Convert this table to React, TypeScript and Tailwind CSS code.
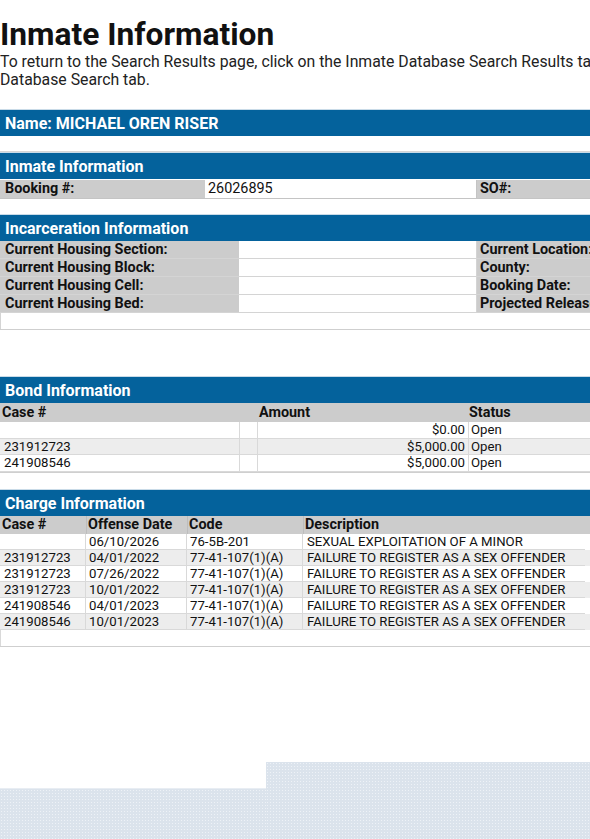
const font = { fontFamily: "Roboto, 'Liberation Sans', sans-serif" };

function Bar({ title }: { title: string }) {
  return (
    <div className="h-[27px] border-t border-[#c9dbe8] bg-[#04629c] pl-[5px] text-[16px] font-bold leading-[27px] text-white">
      {title}
    </div>
  );
}

const housing = [
  ["Current Housing Section:", "Current Location:"],
  ["Current Housing Block:", "County:"],
  ["Current Housing Cell:", "Booking Date:"],
  ["Current Housing Bed:", "Projected Release Date:"],
];

const bonds = [
  ["", "$0.00", "Open"],
  ["231912723", "$5,000.00", "Open"],
  ["241908546", "$5,000.00", "Open"],
];

const charges = [
  ["", "06/10/2026", "76-5B-201", "SEXUAL EXPLOITATION OF A MINOR"],
  ["231912723", "04/01/2022", "77-41-107(1)(A)", "FAILURE TO REGISTER AS A SEX OFFENDER"],
  ["231912723", "07/26/2022", "77-41-107(1)(A)", "FAILURE TO REGISTER AS A SEX OFFENDER"],
  ["231912723", "10/01/2022", "77-41-107(1)(A)", "FAILURE TO REGISTER AS A SEX OFFENDER"],
  ["241908546", "04/01/2023", "77-41-107(1)(A)", "FAILURE TO REGISTER AS A SEX OFFENDER"],
  ["241908546", "10/01/2023", "77-41-107(1)(A)", "FAILURE TO REGISTER AS A SEX OFFENDER"],
];

export default function App() {
  return (
    <div className="flex h-[839px] w-[590px] flex-col overflow-hidden bg-white text-[#111]" style={font}>
      <div className="w-[720px]">
        <h1 className="mt-[17px] text-[31.7px] font-bold leading-[36px] text-[#111]">Inmate Information</h1>
        <p className="text-[15.8px] leading-[18px] text-[#222]">
          To return to the Search Results page, click on the Inmate Database Search Results tab or the Inmate
          Database Search tab.
        </p>

        {/* name */}
        <div className="mt-[20px] border-b border-[#d6d6d6]">
          <Bar title="Name: MICHAEL OREN RISER" />
          <div className="h-[15px]" />
        </div>

        {/* inmate info */}
        <div>
          <Bar title="Inmate Information" />
          <div className="grid grid-cols-[205px_271px_1fr] border-t border-white text-[14.4px] leading-[18px]">
            <div className="border-b border-[#c4c4c4] bg-[#cccccc] pl-[5px] font-bold">Booking #:</div>
            <div className="border-b border-[#c4c4c4] bg-white pl-[3px]">26026895</div>
            <div className="border-b border-l border-[#c4c4c4] bg-[#cccccc] pl-[3px] font-bold">SO#:</div>
          </div>
          <div className="h-[15px]" />
        </div>

        {/* incarceration */}
        <div className="border-b border-[#cfcfcf]">
          <Bar title="Incarceration Information" />
          {housing.map(([a, b]) => (
            <div key={a} className="grid grid-cols-[239px_237px_160px_1fr] text-[14.4px] leading-[17px]">
              <div className="border-b border-[#d4d4d4] bg-[#cccccc] pl-[5px] font-bold">{a}</div>
              <div className="border-b border-[#d4d4d4] bg-white" />
              <div className="border-b border-l border-[#d4d4d4] bg-[#cccccc] pl-[3px] font-bold">{b}</div>
              <div className="border-b border-[#d4d4d4] bg-white" />
            </div>
          ))}
          <div className="h-[16px] border-l border-[#d4d4d4]" />
        </div>

        {/* bond */}
        <div className="mt-[46px] border-b border-[#cfcfcf]">
          <Bar title="Bond Information" />
          <div className="grid grid-cols-[258px_211px_1fr] bg-[#cccccc] text-[14.4px] font-bold leading-[19px]">
            <div className="pl-[2px]">Case #</div>
            <div className="pl-[1px]">Amount</div>
            <div>Status</div>
          </div>
          {bonds.map(([c, amt, st], i) => (
            <div
              key={i}
              className={
                i % 2 === 1
                  ? "grid grid-cols-[240px_18px_211px_1fr] bg-[#ededed] text-[13.2px] leading-[15px]"
                  : "grid grid-cols-[240px_18px_211px_1fr] bg-white text-[13.2px] leading-[16px]"
              }
            >
              <div className="border-b border-r border-[#d9d9d9] pl-[4px]">{c}</div>
              <div className="border-b border-r border-[#d9d9d9]" />
              <div className="border-b border-r border-[#d9d9d9] pr-[3px] text-right">{amt}</div>
              <div className="border-b border-[#d9d9d9] pl-[2px]">{st}</div>
            </div>
          ))}
        </div>

        {/* charge */}
        <div className="mt-[16px] border-b border-[#cfcfcf]">
          <Bar title="Charge Information" />
          <div className="grid grid-cols-[86px_101px_116px_1fr] bg-[#cccccc] text-[14.4px] font-bold leading-[18px]">
            <div className="pl-[2px]">Case #</div>
            <div className="border-l border-[#bdbdbd] pl-[1px]">Offense Date</div>
            <div className="border-l border-[#bdbdbd] pl-[1px]">Code</div>
            <div className="border-l border-[#bdbdbd] pl-[1px]">Description</div>
          </div>
          {charges.map(([c, d, code, desc], i) => (
            <div
              key={i}
              className={
                i % 2 === 1
                  ? "grid grid-cols-[86px_101px_116px_282px] bg-[#ededed] text-[13.2px] leading-[15px]"
                  : "grid grid-cols-[86px_101px_116px_282px] bg-white text-[13.2px] leading-[15px]"
              }
            >
              <div className="border-b border-r border-[#d9d9d9] pl-[4px]">{c}</div>
              <div className="border-b border-r border-[#d9d9d9] pl-[3px]">{d}</div>
              <div className="border-b border-r border-[#d9d9d9] pl-[3px]">{code}</div>
              <div className="border-b border-[#d9d9d9] pl-[4px]">{desc}</div>
            </div>
          ))}
          <div className="h-[16px] border-l border-[#d9d9d9]" />
        </div>
      </div>

      {/* footer pattern */}
      <div className="mt-auto flex h-[77px] w-full">
        <div className="mt-[26px] w-[266px] border-t border-[#e8edf3] bg-[#dbe3ec] bg-[radial-gradient(#eef2f7_0.9px,transparent_1px)] bg-[length:3px_3px]" />
        <div className="flex-1 bg-[#dbe3ec] bg-[radial-gradient(#eef2f7_0.9px,transparent_1px)] bg-[length:3px_3px]" />
      </div>
    </div>
  );
}
